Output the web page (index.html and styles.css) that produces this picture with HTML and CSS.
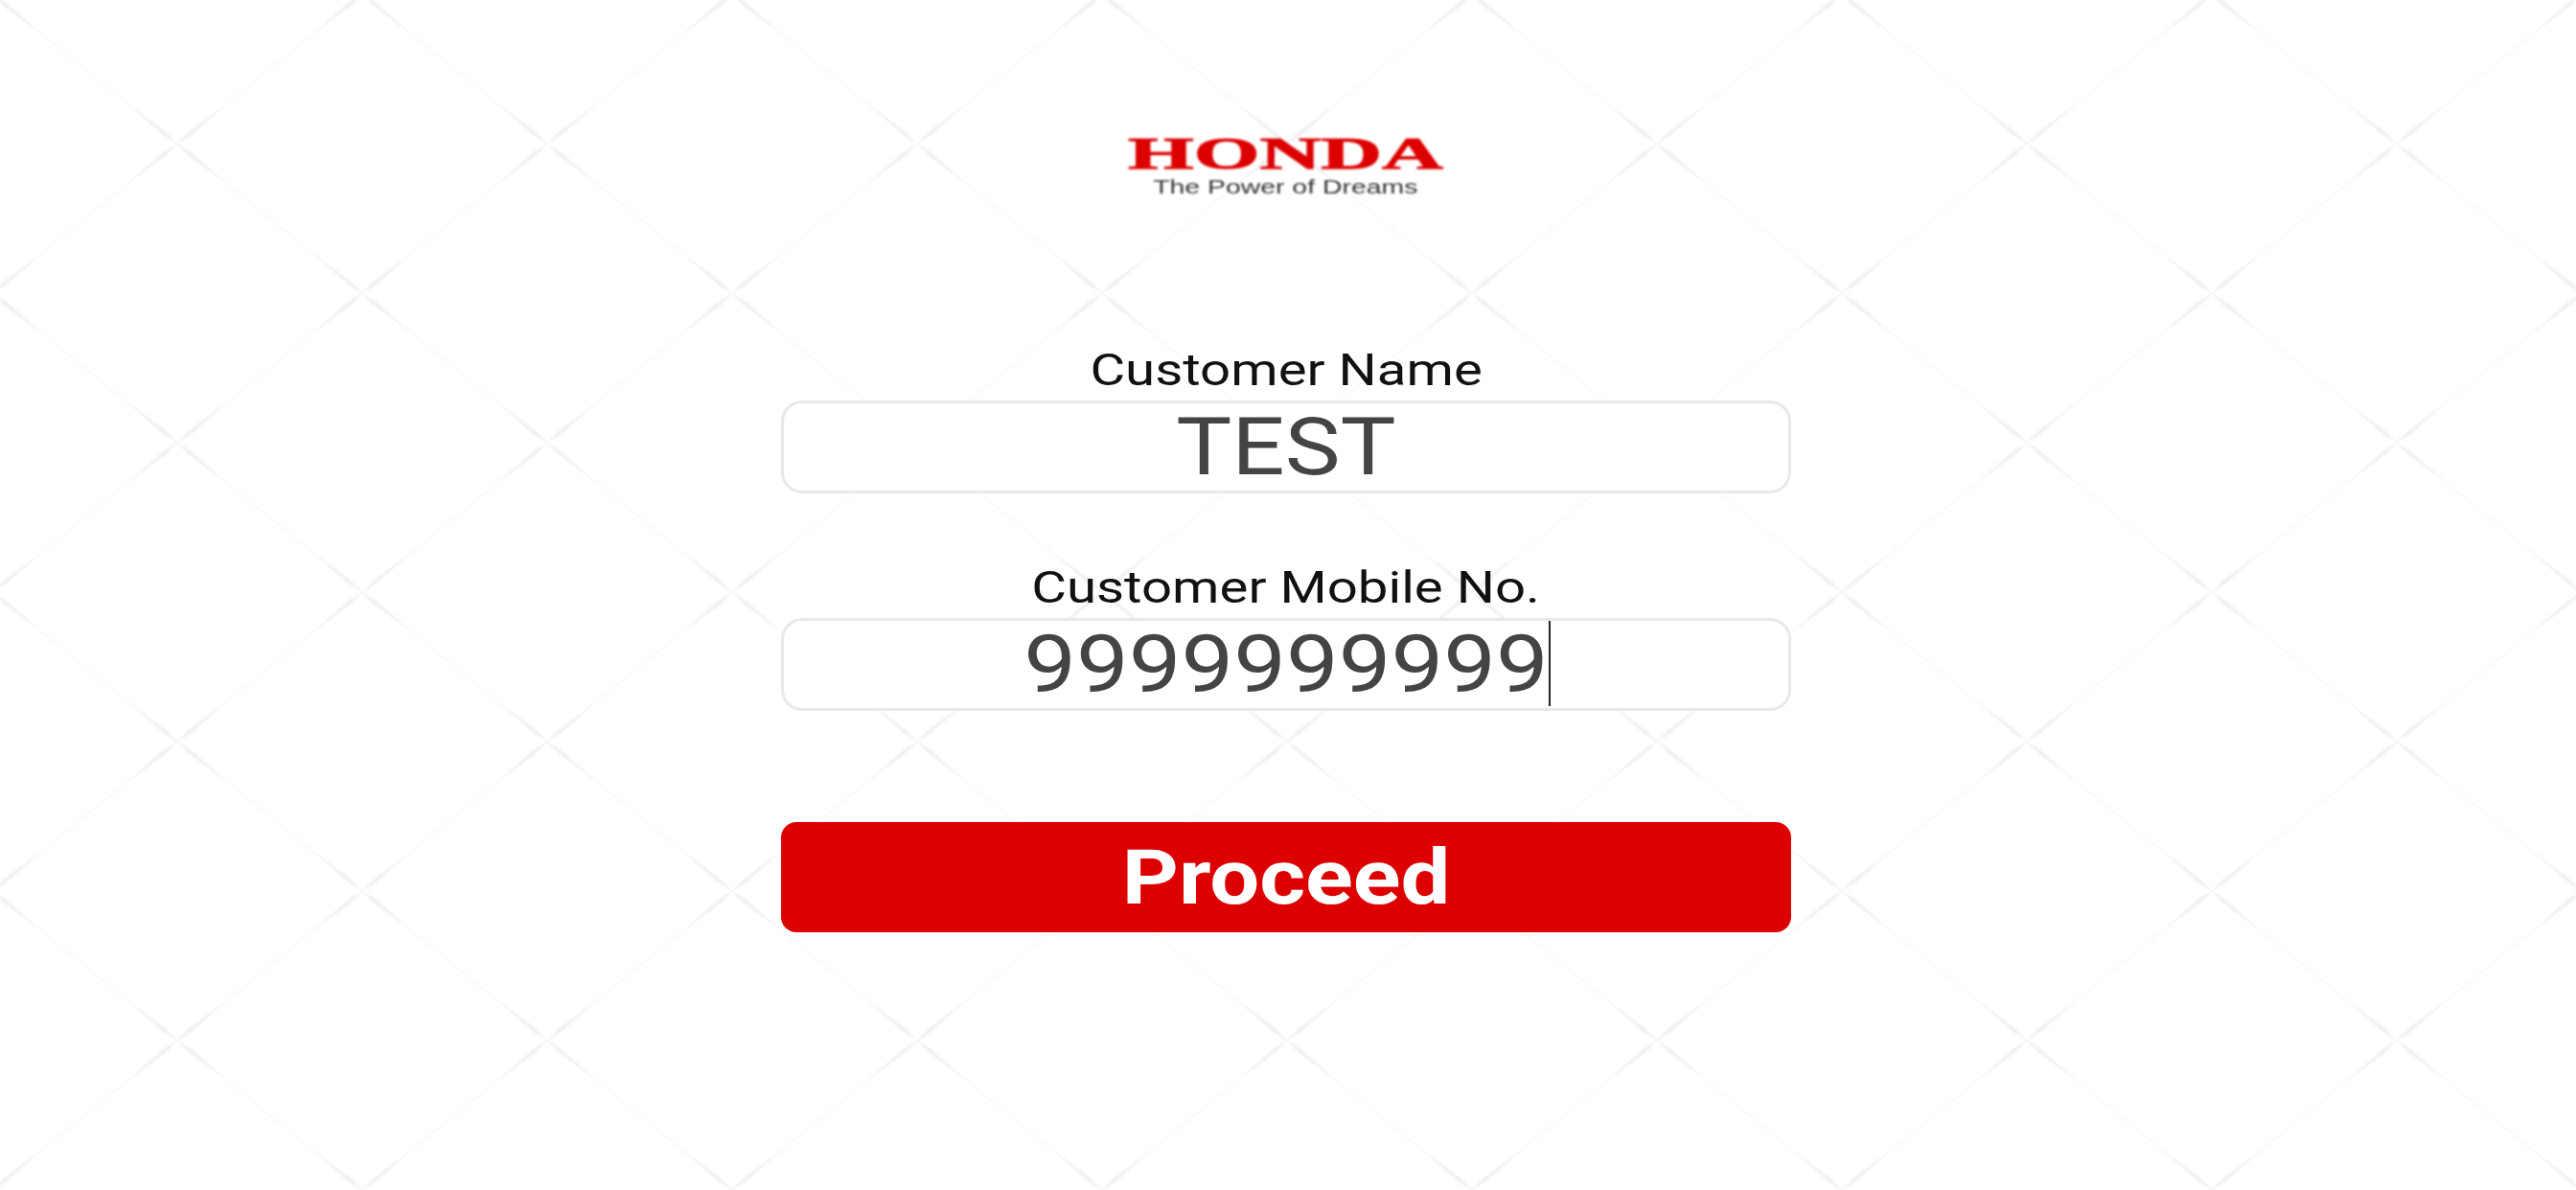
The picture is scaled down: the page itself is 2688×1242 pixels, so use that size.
FILE: index.html
```html
<!DOCTYPE html>
<html lang="en">
<head>
<meta charset="utf-8">
<title>Honda - Customer Details</title>
<link rel="stylesheet" href="styles.css">
</head>
<body>
<main class="page">
  <header class="logo">
    <span class="wide logo-word">HONDA</span>
    <span class="wide logo-tag">The Power of Dreams</span>
  </header>
  <form class="form">
    <div class="field field-name">
      <label class="label"><span class="wide">Customer Name</span></label>
      <div class="input"><span class="wide value">TEST</span></div>
    </div>
    <div class="field field-mobile">
      <label class="label"><span class="wide">Customer Mobile No.</span></label>
      <div class="input"><span class="wide value digits">9999999999</span><span class="caret"></span></div>
    </div>
    <button class="proceed" type="button"><span class="wide">Proceed</span></button>
  </form>
</main>
</body>
</html>
```
FILE: styles.css
```css
* { box-sizing: border-box; }
html, body { margin: 0; height: 100%; }
body {
  background-color: #fff;
  background-image: url("data:image/svg+xml,%3Csvg xmlns='http://www.w3.org/2000/svg' xmlns:xlink='http://www.w3.org/1999/xlink' width='386' height='312' viewBox='0 0 386 312'%3E%3Cdefs%3E%3Cfilter id='b' x='-20%25' y='-20%25' width='140%25' height='140%25'%3E%3CfeGaussianBlur stdDeviation='.8'/%3E%3C/filter%3E%3Cg id='c'%3E%3Cg transform='rotate(38.95)'%3E%3Cpath d='M1 0L16 -2.2L64 0L16 2.2ZM-1 0L-16 -2.2L-64 0L-16 2.2Z'/%3E%3C/g%3E%3Cg transform='rotate(-38.95)'%3E%3Cpath d='M1 0L16 -2.2L64 0L16 2.2ZM-1 0L-16 -2.2L-64 0L-16 2.2Z'/%3E%3C/g%3E%3C/g%3E%3C/defs%3E%3Cpath d='M0 0L386 312M386 0L0 312' stroke='%23f8f8f8' stroke-width='1.3' fill='none'/%3E%3Cg fill='%23f0f0f0' filter='url(%23b)'%3E%3Cuse xlink:href='%23c' x='193' y='156'/%3E%3Cuse xlink:href='%23c' x='0' y='0'/%3E%3Cuse xlink:href='%23c' x='386' y='0'/%3E%3Cuse xlink:href='%23c' x='0' y='312'/%3E%3Cuse xlink:href='%23c' x='386' y='312'/%3E%3C/g%3E%3C/svg%3E");
  background-size: 386px 312px;
  background-position: -8px -6px;
  font-family: Roboto, "Liberation Sans", sans-serif;
  overflow: hidden;
}
.page {
  display: flex;
  flex-direction: column;
  align-items: center;
  padding: 138px 4px 0 0;
}
.wide {
  display: inline-block;
  white-space: nowrap;
  transform-origin: center;
}
.logo {
  display: flex;
  flex-direction: column;
  align-items: center;
  margin-right: 2px;
  filter: blur(0.8px);
}
.logo-word {
  font-family: "Liberation Serif", serif;
  font-weight: 700;
  font-size: 47px;
  line-height: 44px;
  color: #dd0000;
  -webkit-text-stroke: 1px #dd0000;
  transform: scaleX(1.88);
}
.logo-tag {
  font-family: "Liberation Sans", sans-serif;
  font-size: 20px;
  line-height: 22px;
  color: #333;
  transform: scaleX(1.42);
  margin-top: 2px;
}
.form {
  width: 1054px;
  margin-top: 153px;
  display: flex;
  flex-direction: column;
  align-items: stretch;
}
.field { display: flex; flex-direction: column; }
.field-mobile { margin-top: 71px; }
.label {
  text-align: center;
  font-size: 46px;
  line-height: 54px;
  color: #111;
  margin-bottom: 5px;
}
.label .wide { transform: scaleX(1.225); }
.input {
  height: 97px;
  background: #fff;
  border: 3px solid #e8e8e8;
  border-radius: 22px;
  display: flex;
  align-items: center;
  justify-content: center;
  position: relative;
}
.value {
  font-size: 84px;
  line-height: 90px;
  color: #444;
  transform: scaleX(1.16);
}
.caret {
  position: absolute;
  left: 798px;
  top: 0;
  bottom: 2px;
  width: 2px;
  background: #222;
}
.proceed {
  height: 115px;
  margin-top: 116px;
  border: 0;
  border-radius: 16px;
  background: #dd0000;
  color: #fff;
  font-family: inherit;
  font-size: 80px;
  font-weight: 700;
  line-height: 1;
  padding: 0;
}
.proceed .wide { transform: scaleX(1.15); }
```
